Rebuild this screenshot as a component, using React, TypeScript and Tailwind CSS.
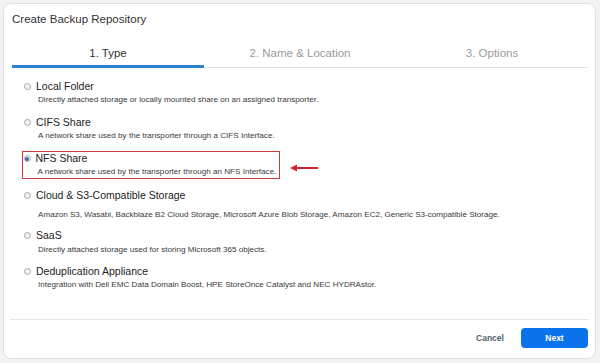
import { useState } from 'react';

type Option = {
  id: string;
  title: string;
  desc: string;
  gap: string;
  descGap?: string;
};

const options: Option[] = [
  {
    id: 'local',
    title: 'Local Folder',
    desc: 'Directly attached storage or locally mounted share on an assigned transporter.',
    gap: '',
  },
  {
    id: 'cifs',
    title: 'CIFS Share',
    desc: 'A network share used by the transporter through a CIFS Interface.',
    gap: 'mt-[11px]',
  },
  {
    id: 'nfs',
    title: 'NFS Share',
    desc: 'A network share used by the transporter through an NFS Interface.',
    gap: 'mt-[11px]',
  },
  {
    id: 'cloud',
    title: 'Cloud & S3-Compatible Storage',
    desc: 'Amazon S3, Wasabi, Backblaze B2 Cloud Storage, Microsoft Azure Blob Storage, Amazon EC2, Generic S3-compatible Storage.',
    gap: 'mt-[11px]',
    descGap: 'mt-[8px]',
  },
  {
    id: 'saas',
    title: 'SaaS',
    desc: 'Directly attached storage used for storing Microsoft 365 objects.',
    gap: 'mt-[9px]',
    descGap: 'mt-[3px]',
  },
  {
    id: 'dedup',
    title: 'Deduplication Appliance',
    desc: 'Integration with Dell EMC Data Domain Boost, HPE StoreOnce Catalyst and NEC HYDRAstor.',
    gap: 'mt-[10px]',
  },
];

const tabs = ['1. Type', '2. Name & Location', '3. Options'];

function Radio({ checked }: { checked: boolean }) {
  return (
    <span className="flex h-[7px] w-[7px] items-center justify-center rounded-full border border-[#a9a9a9] bg-[#f2f2f2]">
      {checked && <span className="h-[4px] w-[4px] rounded-full bg-[#3b6fb0]" />}
    </span>
  );
}

function OptionRow({ option, checked }: { option: Option; checked: boolean }) {
  return (
    <div>
      <div className="flex h-[13px] items-center gap-[5px]">
        <Radio checked={checked} />
        <span className="text-[10.5px] leading-[13px] text-[#222]">{option.title}</span>
      </div>
      <p
        className={`${option.descGap ?? 'mt-[2px]'} pl-[14px] text-[8.1px] leading-[10px] text-[#3a3a3a]`}
      >
        {option.desc}
      </p>
    </div>
  );
}

export default function App() {
  const [selected] = useState('nfs');
  const [tab] = useState(0);

  return (
    <div
      className="h-[363px] w-[600px] bg-[#f3f3f3] p-[3px]"
      style={{ fontFamily: '"Liberation Sans", Arial, sans-serif' }}
    >
      <div className="flex h-[356px] w-[593px] flex-col rounded-[8px] border border-[#e0e0e0] bg-white">
        {/*title*/}
        <div className="h-[30px] pl-[8px] pt-[8px] text-[11.5px] leading-[14px] text-[#333]">
          Create Backup Repository
        </div>

        {/*steps*/}
        <div className="ml-[8px] flex w-[576px]">
          {tabs.map((t, i) => (
            <div
              key={t}
              className={`flex h-[34px] flex-1 items-end justify-center text-[11.5px] leading-[14px] ${
                i === tab
                  ? 'border-b-[3px] border-[#2f7fd3] pb-[5px] text-[#333]'
                  : 'border-b border-[#e2e2e2] pb-[7px] text-[#9a9a9a]'
              }`}
            >
              {t}
            </div>
          ))}
        </div>

        {/*options*/}
        <div className="flex flex-col pl-[20px] pt-[12px]">
          {options.map((o) => {
            const row = <OptionRow option={o} checked={selected === o.id} />;
            if (o.id === selected) {
              return (
                <div key={o.id} className={`flex items-center ${o.gap}`}>
                  <div className="-my-[1px] -ml-[2px] w-[258px] border-[1.5px] border-[#c93a40] pb-[1px] pl-[0.5px]">
                    {row}
                  </div>
                  <svg width="28" height="8" viewBox="0 0 28 8" className="ml-[10px] mt-[5px]">
                    <path d="M0 4 L7 0.5 L7 7.5 Z" fill="#d4232b" />
                    <rect x="6" y="3" width="22" height="2" fill="#d4232b" />
                  </svg>
                </div>
              );
            }
            return (
              <div key={o.id} className={o.gap}>
                {row}
              </div>
            );
          })}
        </div>

        {/*footer*/}
        <div className="mt-auto">
          <div className="mx-[6px] border-t border-[#e6e6e6]" />
          <div className="flex h-[38px] items-center justify-end gap-[11px] pb-[2px] pr-[7px]">
            <button className="w-[40px] text-[8.5px] font-bold text-[#4f5f6f]">Cancel</button>
            <button className="h-[20px] w-[67px] rounded-[4px] bg-[#0a73eb] text-[8.5px] font-bold text-white">
              Next
            </button>
          </div>
        </div>
      </div>
    </div>
  );
}
